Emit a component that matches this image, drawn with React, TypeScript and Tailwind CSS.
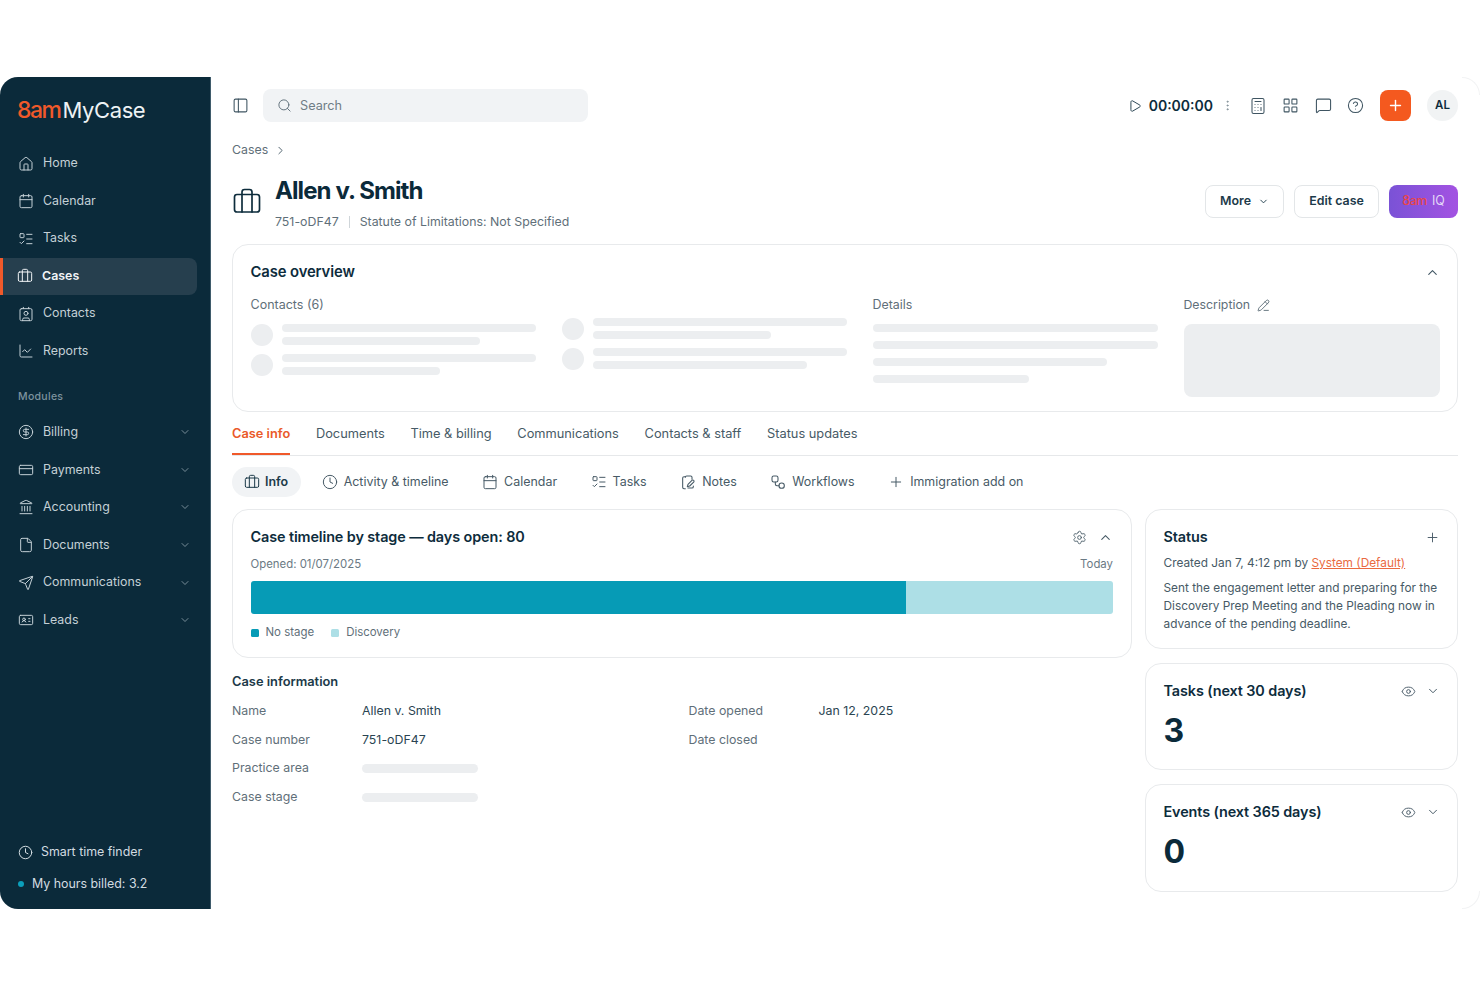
import {
  Briefcase,
  Calculator,
  Calendar,
  ChartLine,
  ChevronDown,
  ChevronRight,
  ChevronUp,
  CircleDollarSign,
  CircleHelp,
  Clock,
  Contact,
  CreditCard,
  EllipsisVertical,
  Eye,
  File,
  House,
  IdCard,
  Landmark,
  LayoutGrid,
  ListTodo,
  MessageSquare,
  PanelLeft,
  PencilLine,
  Play,
  Plus,
  Search,
  Send,
  Settings,
} from 'lucide-react';
import type { ReactNode } from 'react';

const font = { fontFamily: 'Inter, "Noto Sans", sans-serif' };

const NotesIcon = ({ size = 16 }: { size?: number }) => (
  <svg width={size} height={size} viewBox="0 0 24 24" fill="none" stroke="currentColor" strokeWidth="1.6" strokeLinecap="round" strokeLinejoin="round">
    <path d="M8 4H6a2 2 0 0 0-2 2v14a2 2 0 0 0 2 2h2" />
    <path d="M8 5a2 2 0 0 1 2-2h6a2 2 0 0 1 2 2v3" />
    <path d="M12 21h6a2 2 0 0 0 2-2v-1" />
    <path d="M20.5 9.5a1.8 1.8 0 0 0-2.6 0L12 15.5 11 19l3.5-1 6-5.9a1.8 1.8 0 0 0 0-2.6z" />
  </svg>
);

const WorkflowIcon = ({ size = 16 }: { size?: number }) => (
  <svg width={size} height={size} viewBox="0 0 24 24" fill="none" stroke="currentColor" strokeWidth="1.6" strokeLinecap="round" strokeLinejoin="round">
    <rect x="3" y="3" width="9" height="9" rx="2.5" />
    <circle cx="17.5" cy="17.5" r="4" />
    <path d="M8 12v3a2.5 2.5 0 0 0 2.5 2.5h3" />
  </svg>
);

const mainNav = [
  { label: 'Home', icon: <House size={16} strokeWidth={1.5} /> },
  { label: 'Calendar', icon: <Calendar size={16} strokeWidth={1.5} /> },
  { label: 'Tasks', icon: <ListTodo size={16} strokeWidth={1.5} /> },
  { label: 'Cases', icon: <Briefcase size={16} strokeWidth={1.5} />, active: true },
  { label: 'Contacts', icon: <Contact size={16} strokeWidth={1.5} /> },
  { label: 'Reports', icon: <ChartLine size={16} strokeWidth={1.5} /> },
];

const modules = [
  { label: 'Billing', icon: <CircleDollarSign size={16} strokeWidth={1.5} /> },
  { label: 'Payments', icon: <CreditCard size={16} strokeWidth={1.5} /> },
  { label: 'Accounting', icon: <Landmark size={16} strokeWidth={1.5} /> },
  { label: 'Documents', icon: <File size={16} strokeWidth={1.5} /> },
  { label: 'Communications', icon: <Send size={16} strokeWidth={1.5} /> },
  { label: 'Leads', icon: <IdCard size={16} strokeWidth={1.5} /> },
];

const tabs = ['Documents', 'Time & billing', 'Communications', 'Contacts & staff', 'Status updates'];

const subTabs = [
  { label: 'Activity & timeline', icon: <Clock size={16} strokeWidth={1.5} /> },
  { label: 'Calendar', icon: <Calendar size={16} strokeWidth={1.5} /> },
  { label: 'Tasks', icon: <ListTodo size={16} strokeWidth={1.5} /> },
  { label: 'Notes', icon: <NotesIcon /> },
  { label: 'Workflows', icon: <WorkflowIcon /> },
  { label: 'Immigration add on', icon: <Plus size={16} strokeWidth={1.5} /> },
];

function Sidebar() {
  return (
    <aside className="flex w-[211px] shrink-0 flex-col rounded-l-[18px] border-r border-[#3f5b6b] bg-[#0b2a3a] pb-[15px]">
      {/* Logo */}
      <div className="mt-[18px] flex h-[30px] items-center pl-[17px]">
        <span className="text-[23px] font-medium leading-none tracking-[-1.5px] text-[#f0592a]">8am</span>
        <span className="ml-[2px] text-[22px] font-normal leading-none tracking-[-0.4px] text-[#eef2f4]">MyCase</span>
      </div>

      <nav className="mt-[20px]">
        {mainNav.map((item) =>
          item.active ? (
            <div key={item.label} className="mr-[13px] flex h-[37.5px] items-center rounded-r-lg border-l-[3px] border-[#f0592a] bg-[#263f4e] pl-[14px] text-[12.4px] font-semibold text-[#f1f4f6]">
              <span className="mr-[9px]">{item.icon}</span>
              {item.label}
            </div>
          ) : (
            <div key={item.label} className="flex h-[37.5px] items-center pl-[18px] text-[12.4px] text-[#c4d0d6]">
              <span className="mr-[9px]">{item.icon}</span>
              {item.label}
            </div>
          ),
        )}
      </nav>

      <div className="mb-[9.25px] mt-[20.25px] pl-[18px] text-[10.5px] font-medium leading-[14px] tracking-[0.3px] text-[#7d929e]">Modules</div>

      <div>
        {modules.map((item) => (
          <div key={item.label} className="flex h-[37.6px] items-center justify-between pl-[18px] pr-[19px] text-[12.4px] text-[#c4d0d6]">
            <div className="flex items-center">
              <span className="mr-[9px]">{item.icon}</span>
              {item.label}
            </div>
            <ChevronDown size={12} strokeWidth={1.6} className="text-[#92a5af]" />
          </div>
        ))}
      </div>

      <div className="mt-auto pl-[18px] text-[12.4px] text-[#d3dce1]">
        <div className="flex h-[20px] items-center gap-[8px]">
          <Clock size={15} strokeWidth={1.6} />
          Smart time finder
        </div>
        <div className="mt-[12px] flex h-[20px] items-center gap-[8px]">
          <span className="h-[6px] w-[6px] rounded-full bg-[#0b9fbb]" />
          My hours billed: 3.2
        </div>
      </div>
    </aside>
  );
}

function TopBar() {
  return (
    <header className="flex h-[33px] items-center justify-between">
      <div className="flex items-center">
        <PanelLeft size={17} strokeWidth={1.5} className="text-[#3f5562]" />
        <div className="ml-[14px] flex h-[33px] w-[325px] items-center gap-[8px] rounded-lg bg-[#f1f3f5] pl-[14px] text-[12.7px] text-[#6f7d86]">
          <Search size={15} strokeWidth={1.5} className="text-[#5d6d77]" />
          Search
        </div>
      </div>
      <div className="flex items-center text-[#3f5562]">
        <Play size={14} strokeWidth={1.6} className="text-[#1d3a49]" />
        <span className="ml-[7px] text-[14px] font-semibold text-[#0d2c3c]">00:00:00</span>
        <EllipsisVertical size={13} strokeWidth={1.6} className="ml-[8px] text-[#7b8a93]" />
        <Calculator size={18} strokeWidth={1.4} className="ml-[15px]" />
        <LayoutGrid size={17} strokeWidth={1.5} className="ml-[15px]" />
        <MessageSquare size={17} strokeWidth={1.5} className="ml-[16px]" />
        <CircleHelp size={17} strokeWidth={1.5} className="ml-[15px]" />
        <button className="ml-[16px] flex h-[31px] w-[31px] items-center justify-center rounded-lg bg-[#f4591f] text-white">
          <Plus size={17} strokeWidth={2} />
        </button>
        <div className="ml-[16px] flex h-[31px] w-[31px] items-center justify-center rounded-full bg-[#f1f3f4] text-[11.5px] font-semibold text-[#0d2c3c]">AL</div>
      </div>
    </header>
  );
}

function CaseHeader() {
  return (
    <>
      <div className="mt-[18px] flex h-[20px] items-center gap-[6px] text-[12.35px] text-[#5f6f79]">
        Cases
        <ChevronRight size={13} strokeWidth={1.7} className="text-[#475a66]" />
      </div>
      <div className="mt-[15px] flex items-start justify-between">
        <div className="flex">
          <Briefcase size={30} strokeWidth={1.35} className="mt-[12px] text-[#0d2c3c]" />
          <div className="ml-[13px]">
            <h1 className="text-[24px] font-bold leading-[32px] tracking-[-0.9px] text-[#0b2a3a]">Allen v. Smith</h1>
            <div className="mt-[5px] flex h-[20px] items-center text-[12.35px] text-[#5f6f79]">
              751-oDF47
              <span className="mx-[10px] h-[12px] w-px bg-[#cfd5d9]" />
              Statute of Limitations: Not Specified
            </div>
          </div>
        </div>
        <div className="mt-[10px] flex items-center gap-[10px] text-[12.4px] font-semibold text-[#1c3a49]">
          <button className="flex h-[33px] w-[79px] items-center justify-center gap-[7px] rounded-lg border-[1.5px] border-[#e3e6e8]">
            More
            <ChevronDown size={11} strokeWidth={2} />
          </button>
          <button className="flex h-[33px] w-[85px] items-center justify-center rounded-lg border-[1.5px] border-[#e3e6e8]">Edit case</button>
          <button className="flex h-[33px] w-[69px] items-center justify-center gap-[5px] rounded-lg bg-gradient-to-r from-[#7a52d6] to-[#a352e2] font-normal">
            <span className="font-medium tracking-[-0.4px] text-[#e8464a]">8am</span>
            <span className="text-[#e4d8f8]">IQ</span>
          </button>
        </div>
      </div>
    </>
  );
}

const Bar = ({ className }: { className: string }) => <div className={`h-[8.5px] rounded-full bg-[#eceef0] ${className}`} />;

function ContactSkeleton({ second, mt }: { second: string; mt?: string }) {
  return (
    <div className={`flex gap-[9px] ${mt ?? ''}`}>
      <div className="h-[22px] w-[22px] shrink-0 rounded-full bg-[#eceef0]" />
      <div className="flex-1">
        <Bar className="w-full" />
        <Bar className={`mt-[4.5px] ${second}`} />
      </div>
    </div>
  );
}

function CaseOverview() {
  return (
    <section className="mt-[12px] h-[168px] rounded-2xl border-[1.5px] border-[#e8eaec] px-[17.5px] pt-[15.5px]">
      <div className="flex h-[24px] items-center justify-between">
        <h2 className="text-[14.8px] font-semibold tracking-[-0.1px] text-[#0d2c3c]">Case overview</h2>
        <ChevronUp size={15} strokeWidth={1.7} className="text-[#3f5562]" />
      </div>
      <div className="mt-[10px] flex gap-[26px]">
        <div className="w-[285px]">
          <div className="h-[20px] text-[12.5px] leading-[20px] text-[#5f6f79]">Contacts (6)</div>
          <ContactSkeleton mt="mt-[9px]" second="w-[198px]" />
          <ContactSkeleton mt="mt-[8px]" second="w-[158px]" />
        </div>
        <div className="w-[285px] pt-[23px]">
          <ContactSkeleton second="w-[178px]" />
          <ContactSkeleton mt="mt-[8px]" second="w-[214px]" />
        </div>
        <div className="w-[285px]">
          <div className="h-[20px] text-[12.4px] leading-[20px] text-[#5f6f79]">Details</div>
          <Bar className="mt-[9px] w-full" />
          <Bar className="mt-[8.5px] w-full" />
          <Bar className="mt-[8.5px] w-[234px]" />
          <Bar className="mt-[8.5px] w-[156px]" />
        </div>
        <div className="flex-1">
          <div className="flex h-[20px] items-center gap-[7px] pt-[1px] text-[12.3px] text-[#5f6f79]">
            Description
            <PencilLine size={13} strokeWidth={1.5} className="text-[#475a66]" />
          </div>
          <div className="mt-[9px] h-[73px] rounded-lg bg-[#eceef0]" />
        </div>
      </div>
    </section>
  );
}

function Tabs() {
  return (
    <>
      <div className="mt-[12px] flex gap-[25.7px] border-b border-[#e6e8ea] text-[12.8px] text-[#475a66]">
        <div className="-mb-px h-[31px] border-b-2 border-[#f0592a] font-semibold leading-[20px] text-[#ea5a2a]">Case info</div>
        {tabs.map((t) => (
          <div key={t} className="h-[31px] leading-[20px]">{t}</div>
        ))}
      </div>
      <div className="mt-[11px] flex h-[30px] items-center gap-[8.5px] text-[12.45px] text-[#475a66]">
        <div className="flex h-[30px] items-center gap-[5px] rounded-full bg-[#f1f3f5] pl-[12px] pr-[13px] font-semibold text-[#1c3a49]">
          <Briefcase size={16} strokeWidth={1.5} />
          Info
        </div>
        {subTabs.map((t) => (
          <div key={t.label} className="flex items-center gap-[6px] pl-[12px] pr-[13px]">
            {t.icon}
            {t.label}
          </div>
        ))}
      </div>
    </>
  );
}

function Timeline() {
  return (
    <section className="h-[149px] rounded-2xl border-[1.5px] border-[#e8eaec] px-[17.5px] pt-[15px]">
      <div className="flex h-[24px] items-center justify-between">
        <h3 className="text-[14.4px] font-semibold tracking-[-0.1px] text-[#0d2c3c]">Case timeline by stage — days open: 80</h3>
        <div className="flex items-center gap-[11px] text-[#475a66]">
          <Settings size={15} strokeWidth={1.4} />
          <ChevronUp size={15} strokeWidth={1.7} />
        </div>
      </div>
      <div className="mt-[8px] flex h-[16px] items-center justify-between text-[11.4px] text-[#6b7a84]">
        <span>Opened: 01/07/2025</span>
        <span>Today</span>
      </div>
      <div className="mt-[8px] flex h-[33px] overflow-hidden rounded-[3px]">
        <div className="w-[655px] bg-[#069bb6]" />
        <div className="flex-1 bg-[#addfe6]" />
      </div>
      <div className="mt-[11px] flex h-[16px] items-center text-[11.45px] text-[#5f6f79]">
        <span className="h-[8px] w-[8px] rounded-[1.5px] bg-[#069bb6]" />
        <span className="ml-[7px]">No stage</span>
        <span className="ml-[17px] h-[8px] w-[8px] rounded-[1.5px] bg-[#addfe6]" />
        <span className="ml-[7px]">Discovery</span>
      </div>
    </section>
  );
}

function InfoRow({ label, children }: { label: string; children?: ReactNode }) {
  return (
    <div className="flex h-[28.67px] items-center text-[12.35px]">
      <span className="w-[130px] text-[#5f6f79]">{label}</span>
      <span className="text-[#2a4452]">{children}</span>
    </div>
  );
}

function CaseInformation() {
  return (
    <section className="mt-[14px]">
      <h3 className="h-[20px] text-[12.85px] font-semibold leading-[20px] text-[#1c3a49]">Case information</h3>
      <div className="mt-[5px] flex">
        <div className="w-[456.5px]">
          <InfoRow label="Name">Allen v. Smith</InfoRow>
          <InfoRow label="Case number">751-oDF47</InfoRow>
          <InfoRow label="Practice area">
            <Bar className="w-[116px]" />
          </InfoRow>
          <InfoRow label="Case stage">
            <Bar className="w-[116px]" />
          </InfoRow>
        </div>
        <div>
          <InfoRow label="Date opened">Jan 12, 2025</InfoRow>
          <InfoRow label="Date closed" />
        </div>
      </div>
    </section>
  );
}

function StatCard({ title, value, height }: { title: string; value: string; height: string }) {
  return (
    <section className={`rounded-2xl border-[1.5px] border-[#e8eaec] px-[17.5px] pt-[15px] ${height}`}>
      <div className="flex h-[24px] items-center justify-between">
        <h3 className="text-[14.4px] font-semibold tracking-[-0.1px] text-[#0d2c3c]">{title}</h3>
        <div className="flex items-center gap-[10px] text-[#475a66]">
          <Eye size={15} strokeWidth={1.5} />
          <ChevronDown size={14} strokeWidth={1.7} />
        </div>
      </div>
      <div className="mt-[8px] text-[32px] font-bold leading-[40px] text-[#0b2a3a]">{value}</div>
    </section>
  );
}

function StatusCard() {
  return (
    <section className="h-[140px] rounded-2xl border-[1.5px] border-[#e8eaec] px-[17.5px] pt-[15px]">
      <div className="flex h-[24px] items-center justify-between">
        <h3 className="text-[14.4px] font-semibold tracking-[-0.1px] text-[#0d2c3c]">Status</h3>
        <Plus size={15} strokeWidth={1.5} className="text-[#475a66]" />
      </div>
      <p className="mt-[5px] text-[11.85px] leading-[18px] text-[#475a66]">
        Created Jan 7, 4:12 pm by <span className="text-[#ea6a3f] underline">System (Default)</span>
      </p>
      <p className="mt-[6.5px] text-[11.85px] leading-[18.3px] text-[#475a66]">
        Sent the engagement letter and preparing for the Discovery Prep Meeting and the Pleading now in advance of the pending deadline.
      </p>
    </section>
  );
}

export default function App() {
  return (
    <div className="min-h-screen bg-white pb-[78px] pt-[77px]" style={font}>
      <div className="flex h-[832px]">
        <Sidebar />
        <main className="relative min-w-0 flex-1 pl-[21px] pr-[22px] pt-[12px]">
          {/* faint rounded window corners */}
          <div className="absolute right-0 top-0 h-[18px] w-[18px] rounded-tr-[18px] border-r border-t border-[#f2f3f4]" />
          <div className="absolute bottom-0 right-0 h-[18px] w-[18px] rounded-br-[18px] border-b border-r border-[#f2f3f4]" />
          <TopBar />
          <CaseHeader />
          <CaseOverview />
          <Tabs />
          <div className="mt-[12px] flex gap-[13.5px]">
            <div className="w-[899.5px] shrink-0">
              <Timeline />
              <CaseInformation />
            </div>
            <div className="flex flex-1 flex-col gap-[14px]">
              <StatusCard />
              <StatCard title="Tasks (next 30 days)" value="3" height="h-[107px]" />
              <StatCard title="Events (next 365 days)" value="0" height="h-[108px]" />
            </div>
          </div>
        </main>
      </div>
    </div>
  );
}
